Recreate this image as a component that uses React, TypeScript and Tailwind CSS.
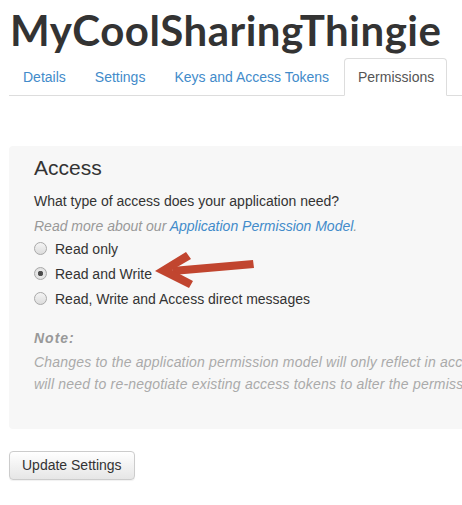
import React, { useState } from 'react';

const tabs = ['Details', 'Settings', 'Keys and Access Tokens', 'Permissions'];

const options = [
  { id: 'read', label: 'Read only' },
  { id: 'readwrite', label: 'Read and Write' },
  { id: 'dm', label: 'Read, Write and Access direct messages' },
];

const Arrow: React.FC = () => (
  <svg
    className="absolute left-[150px] top-[248px]"
    width="110"
    height="44"
    viewBox="0 0 110 44"
  >
    {/* shaft */}
    <path d="M22 19 L103 12 L104 20 L23 27 Z" fill="#c1452f" />
    {/* head */}
    <path d="M5 23 L36 4 L41 11 L22 22 L43 33 L39 40 Z" fill="#c1452f" />
  </svg>
);

const App: React.FC = () => {
  const [access, setAccess] = useState('readwrite');

  return (
    <div className="relative w-[462px] h-[505px] overflow-hidden bg-white text-[14px] text-[#333] font-['Liberation_Sans',Arial,sans-serif]">
      <h1 className="pl-[10px] pt-[6px] text-[42px] leading-[48px] font-bold tracking-[0.5px] text-[#333] font-['Lato','Open_Sans',sans-serif]">
        MyCoolSharingThingie
      </h1>

      {/* Tabs */}
      <div className="ml-[9px] mt-[4px] w-[600px] flex gap-[2px] border-b border-[#ddd]">
        {tabs.map((t) => {
          const active = t === 'Permissions';
          return (
            <a
              key={t}
              href="#"
              className={`-mb-px pl-[13px] pr-[12px] py-[8px] leading-[20px] rounded-t-[4px] border ${
                active
                  ? 'bg-white border-[#ddd] border-b-white text-[#555]'
                  : 'border-transparent text-[#428bca]'
              }`}
            >
              {t}
            </a>
          );
        })}
      </div>

      {/* Panel */}
      <div className="ml-[9px] mt-[50px] w-[640px] h-[283px] rounded-[4px] bg-[#f7f7f7] pl-[25px] pt-[10px]">
        <h3 className="text-[21px] leading-[23px] text-[#333]">Access</h3>
        <p className="mt-[12px] leading-[20px]">What type of access does your application need?</p>
        <p className="mt-[5px] leading-[20px] italic text-[#999]">
          Read more about our{' '}
          <a href="#" className="text-[#428bca]">
            Application Permission Model
          </a>
          .
        </p>
        <div className="flex flex-col">
          {options.map((o) => (
            <label key={o.id} className="flex items-center h-[25px] leading-[20px] cursor-pointer">
              <input
                type="radio"
                name="access"
                checked={access === o.id}
                onChange={() => setAccess(o.id)}
                className="appearance-none m-0 mr-[8px] w-[13px] h-[13px] rounded-full border border-[#a9a9a9] bg-gradient-to-b from-[#f4f4f4] to-[#dcdcdc] checked:bg-[radial-gradient(circle,#444_0,#555_2.5px,#e8e8e8_3px,#dadada_100%)]"
              />
              {o.label}
            </label>
          ))}
        </div>
        <p className="mt-[16px] leading-[22px] font-bold italic text-[#999] tracking-[1px]">Note:</p>
        <p className="mt-[2px] leading-[22px] italic text-[#aaa] tracking-[0.2px] whitespace-nowrap">
          Changes to the application permission model will only reflect in access tokens obtained after the permission model change is saved. You
          <br />
          will need to re-negotiate existing access tokens to alter the permission level associated with each of your application's users.
        </p>
      </div>

      <button className="ml-[9px] mt-[22px] h-[29px] px-[12px] rounded-[4px] border border-[#ccc] bg-gradient-to-b from-white to-[#e6e6e6] text-[14px] text-[#333] shadow-[0_1px_1px_rgba(0,0,0,0.06)]">
        Update Settings
      </button>

      <Arrow />
    </div>
  );
};

export default App;
